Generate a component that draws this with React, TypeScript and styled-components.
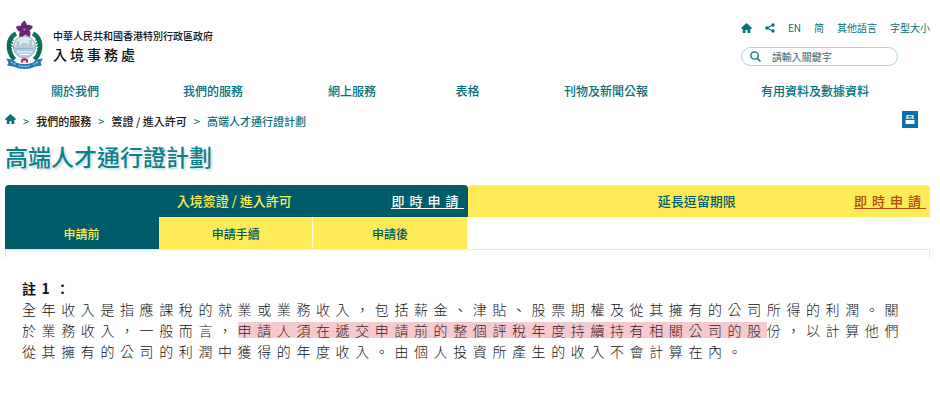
import React from "react";
import styled, { createGlobalStyle } from "styled-components";

const teal = "#04717b";
const deepTeal = "#005c69";
const yellow = "#ffeb55";
const rule = "#e9e9e9";

const GlobalStyle = createGlobalStyle`
  * { box-sizing: border-box; }
  body {
    margin: 0;
    background: #fff;
    color: #111;
    font-family: "Noto Sans CJK TC", "Noto Sans", sans-serif;
    font-size: 12px;
  }
  a { color: inherit; text-decoration: none; }
  button, input { font: inherit; color: inherit; }
`;

const Page = styled.div`
  padding: 20px 10px 0 5px;
`;

const Header = styled.header`
  display: flex;
  justify-content: space-between;
  align-items: flex-start;
`;

const Brand = styled.a`
  display: flex;
  gap: 9px;
  height: 50px;
`;

const BrandText = styled.div`
  display: flex;
  flex-direction: column;
  padding-top: 8px;
`;

const Region = styled.span`
  font-size: 10px;
  line-height: 16px;
  font-weight: 500;
`;

const Department = styled.span`
  font-size: 14px;
  line-height: 20px;
  font-weight: 500;
  letter-spacing: 3px;
`;

const Tools = styled.div`
  display: flex;
  flex-direction: column;
  gap: 11px;
  color: ${teal};
  font-size: 10px;
`;

const Utilities = styled.nav`
  display: flex;
  align-items: center;
  gap: 13px;
  height: 16px;
  line-height: 16px;

  svg { display: block; }
`;

const Search = styled.form`
  display: flex;
  align-items: center;
  gap: 11px;
  width: 157px;
  height: 19px;
  padding-left: 8px;
  border: 1px solid #a5d8de;
  border-radius: 10px;
`;

const SearchButton = styled.button`
  display: flex;
  padding: 0;
  border: 0;
  background: none;
`;

const SearchInput = styled.input`
  flex: 1;
  min-width: 0;
  height: 16px;
  padding: 0;
  border: 0;
  outline: 0;
  background: transparent;
  line-height: 16px;
  &::placeholder { color: #2c6b70; opacity: 1; }
`;

const MainNav = styled.nav`
  display: grid;
  grid-template-columns: 140fr 136fr 142fr 89fr 188fr 230fr;
  margin-top: 11px;
  line-height: 20px;
  color: ${teal};
  font-weight: 500;
  text-align: center;
`;

const CrumbBar = styled.div`
  display: flex;
  justify-content: space-between;
  align-items: flex-start;
  height: 20px;
  margin-top: 10px;
  padding-right: 12px;
`;

const Crumbs = styled.nav`
  display: flex;
  align-items: center;
  gap: 7px;
  color: ${teal};
  font-size: 11px;
  font-weight: 500;
  line-height: 20px;

  svg { display: block; margin-bottom: 4px; }
`;

const Crumb = styled.a<{ $current?: boolean }>`
  color: ${(p) => (p.$current ? teal : "#111")};
`;

const PrintButton = styled.button`
  display: flex;
  align-items: center;
  justify-content: center;
  width: 16px;
  height: 17px;
  padding: 0;
  border: 0;
  background: #0b70a5;
`;

const Title = styled.h1`
  margin: 9px 0 0;
  color: #0a7f8d;
  font-size: 23px;
  font-weight: 500;
  line-height: 32px;
  text-shadow: 2px 2px 2px #d5dcdd;
`;

const Tabs = styled.div`
  display: grid;
  grid-template-columns: 1fr 1fr;
  margin-top: 13px;
`;

const Tab = styled.div<{ $active?: boolean }>`
  display: grid;
  grid-template-columns: 1fr auto 1fr;
  align-items: center;
  height: 32px;
  padding-right: 4px;
  border-radius: 4px 4px 0 0;
  background: ${(p) => (p.$active ? deepTeal : yellow)};
  color: ${(p) => (p.$active ? yellow : deepTeal)};
`;

const TabButton = styled.button`
  grid-column: 2;
  padding: 0;
  border: 0;
  background: none;
  font-size: 13px;
  font-weight: 500;
  line-height: 20px;
`;

const ApplyLink = styled.a<{ $light?: boolean }>`
  justify-self: end;
  border-bottom: 1px solid;
  color: ${(p) => (p.$light ? "#fff" : "#b5490f")};
  font-size: 13px;
  font-weight: 500;
  line-height: 15px;
  letter-spacing: 5px;
`;

const Steps = styled.div`
  display: grid;
  grid-template-columns: repeat(3, 1fr);
  width: 50%;
`;

const Step = styled.button<{ $active?: boolean }>`
  height: 32px;
  padding: 0;
  border: 0;
  border-right: 1px solid ${(p) => (p.$active ? deepTeal : "#fffbd8")};
  background: ${(p) => (p.$active ? deepTeal : yellow)};
  color: ${(p) => (p.$active ? yellow : deepTeal)};
  font-size: 12px;
  font-weight: 500;
`;

const PanelEdge = styled.div`
  height: 9px;
  border: 1px solid ${rule};
  border-bottom: 0;
`;

const Note = styled.section`
  margin-top: 20px;
  padding: 0 14px 0 17px;
  color: #111;
  font-size: 14px;
  line-height: 21px;
  letter-spacing: 0.4em;
`;

const NoteTitle = styled.h2`
  margin: 0;
  font-size: 14px;
  font-weight: 700;
`;

const NoteText = styled.p`
  margin: 0;
  font-weight: 300;
`;

const Highlight = styled.mark`
  background: linear-gradient(#f5c9ce, #f5c9ce) center / 100% 16px no-repeat;
  color: #3a1a1e;
`;

const HomeIcon = () => (
  <svg width="11" height="10" viewBox="0 0 22 20" fill={teal} aria-hidden="true">
    <path d="M11 0 22 10 20.5 12H18.5V20H13V14H9V20H3.5V12H1.5L0 10Z" />
  </svg>
);

const ShareIcon = () => (
  <svg width="10" height="10" viewBox="0 0 20 20" fill={teal} aria-hidden="true">
    <path d="M16 4 4 10 16 16" fill="none" stroke={teal} strokeWidth="2.4" />
    <circle cx="4" cy="10" r="3.6" />
    <circle cx="16" cy="4" r="3.4" />
    <circle cx="16" cy="16" r="3.4" />
  </svg>
);

const SearchIcon = () => (
  <svg width="11" height="11" viewBox="0 0 22 22" fill="none" stroke={teal} aria-hidden="true">
    <circle cx="9" cy="9" r="7.4" strokeWidth="2.6" />
    <path d="M14.5 14.5 21 21" strokeWidth="3" />
  </svg>
);

const PrintIcon = () => (
  <svg width="10" height="11" viewBox="0 0 20 22" aria-hidden="true">
    <path d="M3 2H17L18 10H2Z" fill="#c4e1ef" />
    <path d="M6 5H14M6 8H14M10 3V9" stroke="#0b70a5" strokeWidth="1.4" />
    <path d="M1 12H19V20H1Z" fill="#fff" />
  </svg>
);

const petals = [0, 72, 144, 216, 288];
const leaves = [0, 1, 2, 3, 4, 5, 6];

const Emblem = () => (
  <svg width="39" height="50" viewBox="0 0 78 100" role="img" aria-label="入境事務處">
    <g fill="none" stroke="#08765c" strokeWidth="9">
      <path d="M22 27C5 36 2 62 19 79" />
      <path d="M56 27C73 36 76 62 59 79" />
    </g>
    <g stroke="#075e4b" strokeWidth="2.4">
      {leaves.map((i) => (
        <g key={i}>
          <path d={`M${7 + Math.abs(i - 3)} ${36 + i * 6}l7 5`} />
          <path d={`M${71 - Math.abs(i - 3)} ${36 + i * 6}l-7 5`} />
        </g>
      ))}
    </g>
    <circle cx="39" cy="54" r="22" fill="#dcecf6" stroke="#8fa6b3" strokeWidth="2" />
    <path d="M18 54H60C60 65 52 75 39 75S18 65 18 54Z" fill="#a9cbe3" />
    <path d="M20 52H58M21 57H57" stroke="#93a9b8" strokeWidth="1.6" />
    <path d="M24 53V43H28V53M49 53V41H53V53M34 53V47H44V53" fill="#bccbd5" stroke="#9aaebb" />
    <path d="M24 64H54M28 69H50" stroke="#fff" strokeWidth="2.4" />
    <g transform="translate(39 19)" fill="#692477">
      {petals.map((angle) => (
        <path key={angle} transform={`rotate(${angle})`} d="M0 1C-10-4-9-12 0-18 3-14 9-8 0 1Z" />
      ))}
      <circle r="2" fill="#c48acb" />
    </g>
    <path d="M2 77 15 79 22 85Q39 91 56 85L63 79 76 77 71 85 74 91 61 93Q39 103 17 93L4 91 7 85Z" fill="#2378b7" />
    <path d="M12 84 21 89M27 91Q39 95 51 91M57 89 66 84" fill="none" stroke="#b9d9ee" strokeWidth="2.6" strokeDasharray="4 2" />
    <path d="M32 79Q39 73 46 79V85H32Z" fill="#c51e42" />
    <path d="M36 81H42V86H36Z" fill="#f5dae0" />
  </svg>
);

const navItems = ["關於我們", "我們的服務", "網上服務", "表格", "刊物及新聞公報", "有用資料及數據資料"];

const note = {
  title: "註1\uFF1A",
  before:
    "全年收入是指應課稅的就業或業務收入\uFF0C包括薪金、津貼、股票期權及從其擁有的公司所得的利潤。關於業務收入\uFF0C一般而言\uFF0C",
  marked: "申請人須在遞交申請前的整個評稅年度持續持有相關公司的股",
  after:
    "份\uFF0C以計算他們從其擁有的公司的利潤中獲得的年度收入。由個人投資所產生的收入不會計算在內。",
};

export default function App() {
  return (
    <>
      <GlobalStyle />
      <Page lang="zh-Hant">
        <Header>
          <Brand href="#">
            <Emblem />
            <BrandText>
              <Region>中華人民共和國香港特別行政區政府</Region>
              <Department>入境事務處</Department>
            </BrandText>
          </Brand>
          <Tools>
            <Utilities aria-label="工具">
              <a href="#" aria-label="主頁"><HomeIcon /></a>
              <a href="#" aria-label="分享"><ShareIcon /></a>
              <a href="#">EN</a>
              <a href="#" lang="zh-Hans">简</a>
              <a href="#">其他語言</a>
              <a href="#">字型大小</a>
            </Utilities>
            <Search role="search" onSubmit={(e) => e.preventDefault()}>
              <SearchButton type="submit" aria-label="搜尋"><SearchIcon /></SearchButton>
              <SearchInput type="text" aria-label="請輸入關鍵字" placeholder="請輸入關鍵字" />
            </Search>
          </Tools>
        </Header>

        <MainNav aria-label="主選單">
          {navItems.map((item) => <a key={item} href="#">{item}</a>)}
        </MainNav>

        <CrumbBar>
          <Crumbs aria-label="路徑">
            <a href="#" aria-label="主頁"><HomeIcon /></a>
            <span>&gt;</span>
            <Crumb href="#">我們的服務</Crumb>
            <span>&gt;</span>
            <Crumb href="#">簽證 / 進入許可</Crumb>
            <span>&gt;</span>
            <Crumb href="#" $current aria-current="page">高端人才通行證計劃</Crumb>
          </Crumbs>
          <PrintButton type="button" aria-label="列印"><PrintIcon /></PrintButton>
        </CrumbBar>

        <main>
          <Title>高端人才通行證計劃</Title>
          <Tabs>
            <Tab $active>
              <TabButton type="button">入境簽證 / 進入許可</TabButton>
              <ApplyLink href="#" $light>即時申請</ApplyLink>
            </Tab>
            <Tab>
              <TabButton type="button">延長逗留期限</TabButton>
              <ApplyLink href="#">即時申請</ApplyLink>
            </Tab>
          </Tabs>
          <Steps>
            <Step type="button" $active>申請前</Step>
            <Step type="button">申請手續</Step>
            <Step type="button">申請後</Step>
          </Steps>
          <PanelEdge />
          <Note>
            <NoteTitle>{note.title}</NoteTitle>
            <NoteText>
              {note.before}
              <Highlight>{note.marked}</Highlight>
              {note.after}
            </NoteText>
          </Note>
        </main>
      </Page>
    </>
  );
}
